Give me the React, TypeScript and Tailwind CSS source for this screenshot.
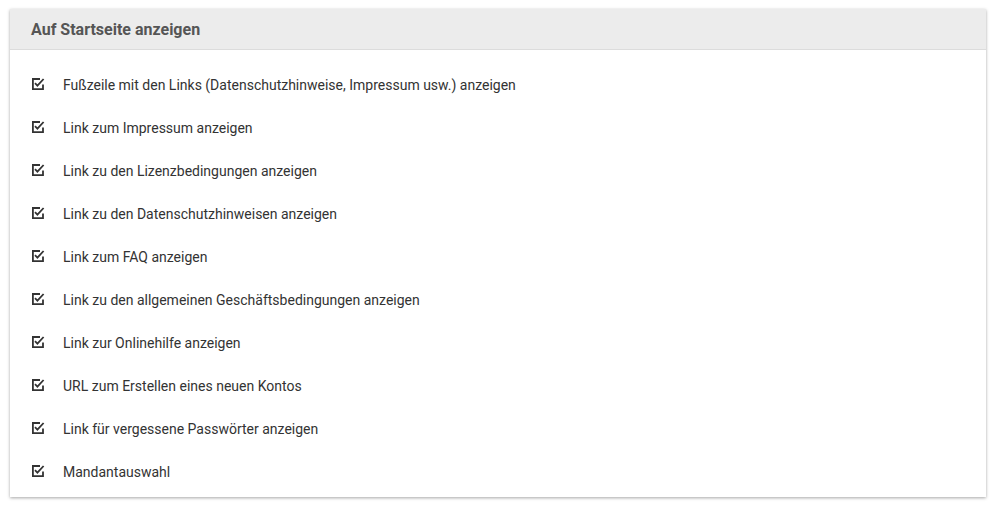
const items = [
  'Fußzeile mit den Links (Datenschutzhinweise, Impressum usw.) anzeigen',
  'Link zum Impressum anzeigen',
  'Link zu den Lizenzbedingungen anzeigen',
  'Link zu den Datenschutzhinweisen anzeigen',
  'Link zum FAQ anzeigen',
  'Link zu den allgemeinen Geschäftsbedingungen anzeigen',
  'Link zur Onlinehilfe anzeigen',
  'URL zum Erstellen eines neuen Kontos',
  'Link für vergessene Passwörter anzeigen',
  'Mandantauswahl',
]

function CheckIcon() {
  return (
    <svg width="14" height="14" viewBox="0 0 14 14" fill="none" className="shrink-0">
      <path d="M9 2H1.9V12.1H12V7.5" stroke="#333" strokeWidth="1.8" />
      <path d="M4 6.2L6.4 8.6L12.6 2" stroke="#333" strokeWidth="1.8" />
    </svg>
  )
}

export default function App() {
  return (
    <div className="min-h-screen bg-white pl-[10px] pr-[11px] pt-[9px] font-['Roboto',sans-serif]">
      <div className="bg-white shadow-[0_1px_3px_rgba(0,0,0,0.35)]">
        <div className="flex h-[41px] items-center border-b border-[#dcdcdc] bg-[#ececec] px-[21px] pt-[2px] text-[16px] font-bold text-[#555]">
          Auf Startseite anzeigen
        </div>
        <ul className="flex flex-col gap-[19px] pt-[23px] pb-[13px]">
          {items.map((t) => (
            <li key={t} className="flex h-[24px] items-start gap-[18px] pl-[21px] text-[14px] text-[#333]">
              <span className="pt-[4px]">
                <CheckIcon />
              </span>
              <span className="leading-[24px]">{t}</span>
            </li>
          ))}
        </ul>
      </div>
    </div>
  )
}
